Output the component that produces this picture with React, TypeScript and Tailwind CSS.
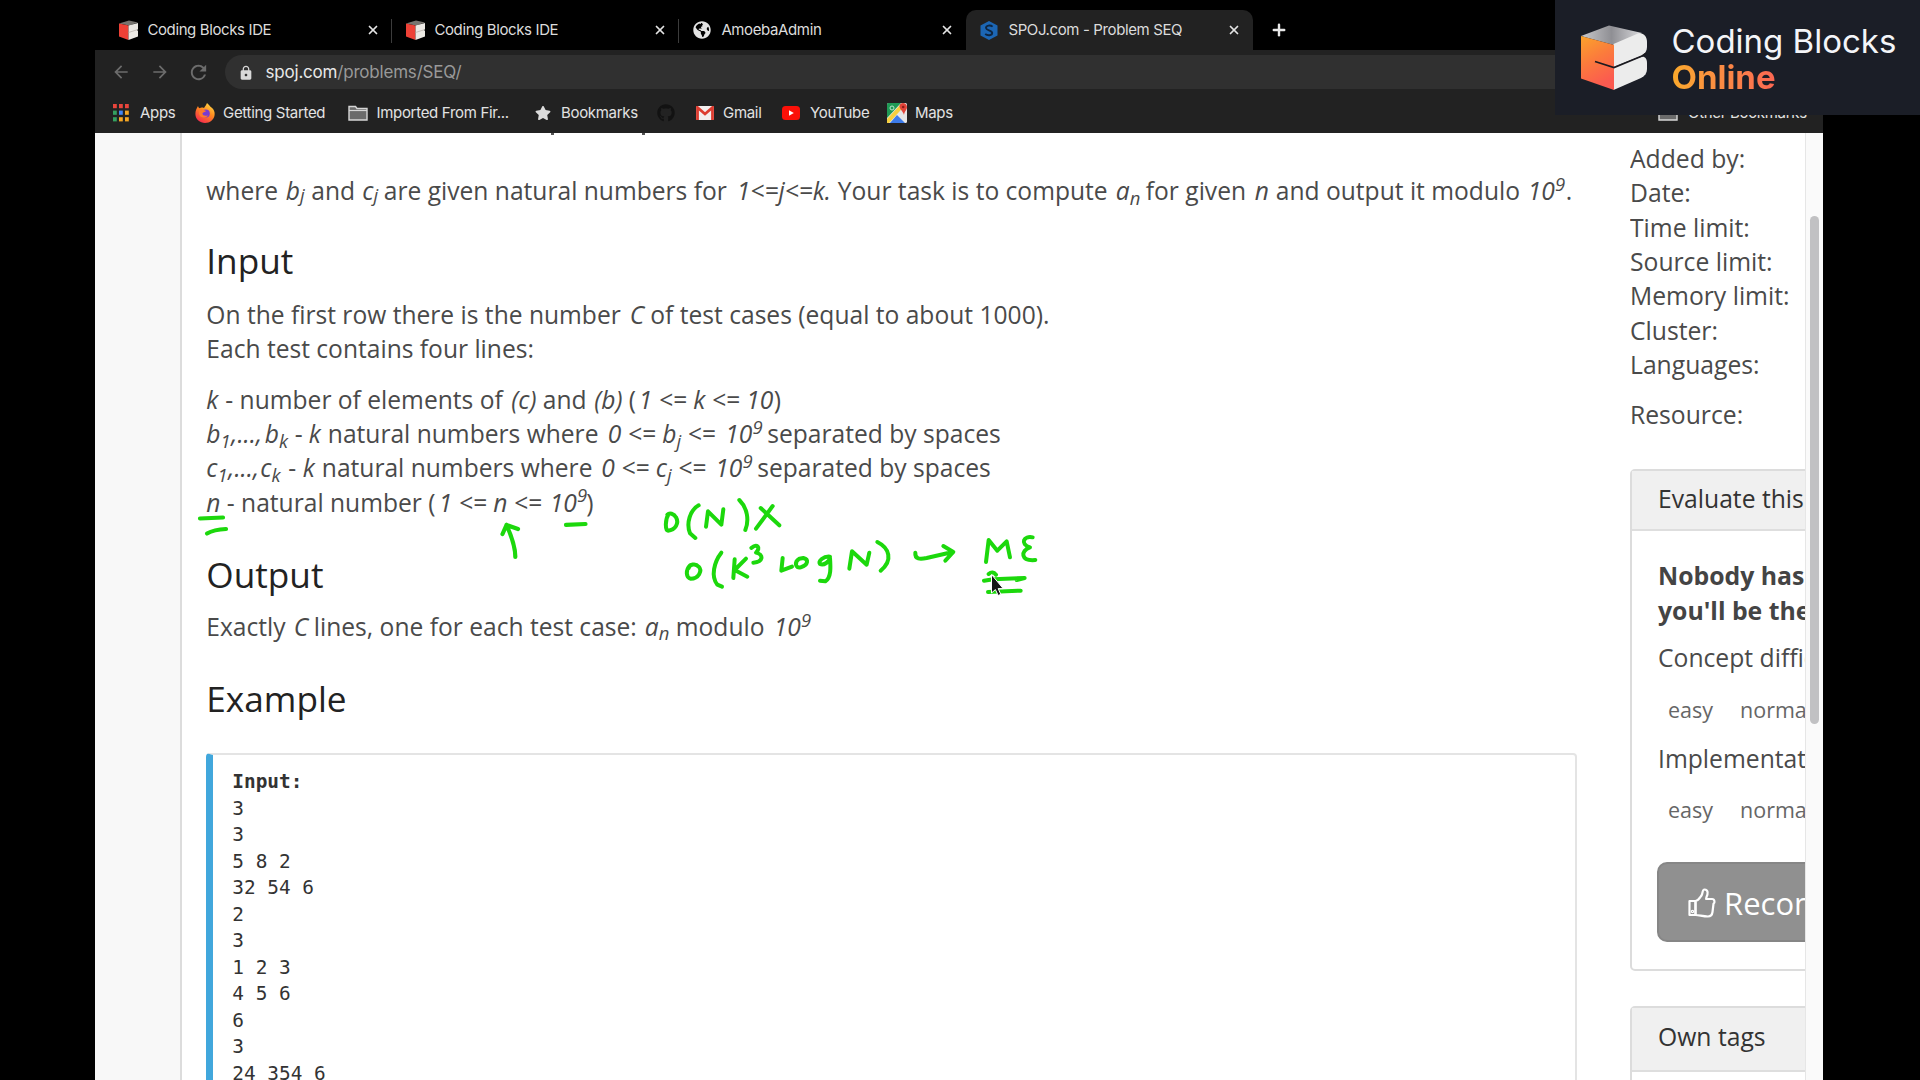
import React, { ReactNode } from "react";
import { MdArrowBack, MdArrowForward, MdRefresh, MdLock } from "react-icons/md";
import { FaGithub, FaGlobeAmericas, FaStar } from "react-icons/fa";
import { X, Plus } from "lucide-react";

const LEFT = 205.5;

/* ---------- icons ---------- */

function BlockIcon() {
  return (
    <svg viewBox="0 0 20 20" className="size-5">
      <path d="M0 3.5 10 0.5 19 2.5 10 5.5Z" fill="#77746f" />
      <path d="M0 3.5 9.5 5.5V20L0 16.5Z" fill="#ee4136" />
      <path d="M9.5 5.5 19 3V9L18 10 19 11V16.5L9.5 20Z" fill="#ece9e4" />
      <path d="M9.5 12.5 19 9.5" fill="none" stroke="#b5aca6" strokeWidth=".7" />
    </svg>
  );
}

function SpojIcon() {
  return (
    <svg viewBox="0 0 18 19" className="h-[19px] w-[18px]">
      <path d="M9 0 17.5 4.5V14.5L9 19 .5 14.5V4.5Z" fill="#1c66b4" />
      <path d="M12.6 5.6C10.5 3.8 5.8 4.2 6 7c.2 2.6 6.2 2 6.2 5 0 2.7-4.8 2.8-7 1" fill="none" stroke="#0e2540" strokeWidth="1.9" />
    </svg>
  );
}

function AppsIcon() {
  const colors = ["#e8453c", "#e8453c", "#e8453c", "#34a060", "#4285f4", "#f5a623", "#34a060", "#f5a623", "#f5a623"];
  const cells = colors.map((c, i) => (
    <rect key={i} x={(i % 3) * 6} y={Math.floor(i / 3) * 6.6} width="3.8" height="4.2" fill={c} />
  ));
  return <svg viewBox="0 0 16 18" className="h-[18px] w-4">{cells}</svg>;
}

function FirefoxIcon() {
  return (
    <svg viewBox="0 0 20 20" className="size-5">
      <defs>
        <linearGradient id="ff" x1=".85" y1="0" x2=".25" y2="1">
          <stop offset="0" stopColor="#ffe14a" />
          <stop offset=".45" stopColor="#ff8a1f" />
          <stop offset="1" stopColor="#f5264f" />
        </linearGradient>
      </defs>
      <path d="M12 0c2 1.5 2.5 3 4.5 4.5C19 6.5 20 9 19.6 12 19 16.5 15 20 10 20S.4 16.5.4 11c0-3 1-5.500 2.6-8 .3 1.2.8 1.8 1.5 2.2C6 4.300 7.5 4.5 9 5c1.2-1.5 2-3 3-5Z" fill="url(#ff)" />
      <circle cx="10.8" cy="10.5" r="4" fill="#7a3bd0" />
      <path d="M4 7c3-1.5 5 .2 7 1-1 1.5-3.5 1-3.5 2.6 0 2 3 3 5.500 1.6-1.5 3.5-8 3-9-1.2Z" fill="#ff7a2a" />
    </svg>
  );
}

function FolderIcon() {
  return (
    <svg viewBox="0 0 20 16" className="h-4 w-5">
      <path d="M1 15V1.5h6.5l1.5 2h10V15Z" fill="#6b6b6b" stroke="#d6d6d6" strokeWidth="1.4" />
      <path d="M1 5.5h18" stroke="#d6d6d6" strokeWidth="1.2" />
    </svg>
  );
}

function GmailIcon() {
  return (
    <svg viewBox="0 0 18 14" className="h-[14px] w-[18px]">
      <rect width="18" height="14" rx="1.5" fill="#f3eeee" />
      <path d="M1.5 14V1.5L9 8l7.5-6.5V14" fill="none" stroke="#dd3c30" strokeWidth="2.8" />
    </svg>
  );
}

function YouTubeIcon() {
  return (
    <svg viewBox="0 0 18 14" className="h-[14px] w-[18px]">
      <rect width="18" height="14" rx="3.5" fill="#fb1008" />
      <path d="M7 4.2v5.6L11.8 7Z" fill="#fff" />
    </svg>
  );
}

function MapsIcon() {
  return (
    <svg viewBox="0 0 20 20" className="size-5">
      <rect width="20" height="20" rx="1.5" fill="#e6e6e6" />
      <path d="M0 1.5Q0 0 1.5 0H14L0 15Z" fill="#1f9a55" />
      <path d="M0 20v-4L14 1l2.5 3L2 20Z" fill="#f6cf3e" />
      <path d="M3 20 10 12l8 8Z" fill="#3c7bea" />
      <path d="M12.5 3c0-4 7.5-4 7.5 1 0 3-2.5 4-3 8-1-4-4.5-5.500-4.5-9Z" fill="#e2453a" />
      <circle cx="16.2" cy="4" r="1.3" fill="#8c1d18" />
      <circle cx="5" cy="5" r="2" fill="none" stroke="#bfe6cf" strokeWidth="1" />
    </svg>
  );
}

function ThumbIcon() {
  return (
    <svg viewBox="0 0 28 30" className="h-[30px] w-7" fill="none" stroke="#fff" strokeWidth="2.2" strokeLinejoin="round" strokeLinecap="round">
      <path d="M7.5 13H1.5V27H7.5Z" />
      <path d="M7.5 13c3-.5 4.5-3.5 6-5.500C15 5.500 14 1.5 16.5 1.5c4 0 3.5 4.5 2 7.5-.3 1-.5 1.5-.3 2H24c3 0 3 4 1.5 4.8L24.5 24c-.4 3-1.5 4.5-4.5 4.5-5 0-9-1.5-12.5-1.5Z" />
      <circle cx="4.5" cy="23.5" r=".6" />
    </svg>
  );
}

function CubeLogo() {
  return (
    <svg viewBox="0 0 67 66" className="h-[66px] w-[67px]">
      <defs>
        <linearGradient id="cubeFront" x1="0" y1="0" x2=".35" y2="1">
          <stop offset="0" stopColor="#fba32b" />
          <stop offset=".5" stopColor="#fb7b3c" />
          <stop offset="1" stopColor="#fb5a50" />
        </linearGradient>
        <linearGradient id="cubeTop" x1="0" y1="0" x2="1" y2="0">
          <stop offset="0" stopColor="#c9c9cc" />
          <stop offset=".5" stopColor="#8f8f94" />
          <stop offset="1" stopColor="#dadadd" />
        </linearGradient>
      </defs>
      <path d="M1 11 29 .5 62 8 34 20Z" fill="url(#cubeTop)" />
      <path d="M33.5 19 58 8.5C63 7 67 11 67 17V22C67 26 65 29 61 31L33.5 42Z" fill="#ececec" />
      <path d="M33.5 42 61 32C65 31 67 34 67 38V44C67 48 65 51 61 53L33.5 65Z" fill="#ececec" />
      <path d="M1 11 34 20V65L1 53.5Z" fill="url(#cubeFront)" />
      <path d="M15 36.5 34 42.5 62 31 66.5 28" fill="none" stroke="#1b1a20" strokeWidth="1.7" />
    </svg>
  );
}

/* ---------- browser chrome ---------- */

function Tab({ icon, title, active, divider }: { icon: ReactNode; title: string; active?: boolean; divider?: boolean }) {
  return (
    <div className={"relative flex h-10 w-[287px] items-center pl-[14px] pr-3 " + (active ? "rounded-t-[10px] bg-[#222222]" : "")}>
      <span className="flex w-[28.4px] shrink-0">{icon}</span>
      <span className="flex-1 whitespace-nowrap text-[15px] tracking-[-0.38px] text-[#dcdcdc]">{title}</span>
      <X className="size-[14px]" strokeWidth={3} color="#e4e4e4" />
      {divider && <span className="absolute right-0 top-[9px] h-6 w-px bg-[#3c3c3c]" />}
    </div>
  );
}

function Bookmark({ icon, label, className }: { icon: ReactNode; label?: string; className: string }) {
  return (
    <div className={"flex shrink-0 items-center " + className}>
      {icon}
      {label && <span className="whitespace-nowrap text-[15px] tracking-[-0.31px] text-[#e2e2e2]">{label}</span>}
    </div>
  );
}

/* ---------- problem text ---------- */

type Seg = [number, ReactNode];

/* Each segment starts at its own x; its width runs to the start of the next one. */
function Line({ segs }: { segs: Seg[] }) {
  return (
    <div className="flex h-[34.3px] whitespace-pre leading-[34.3px]">
      {segs.map(([x, node], i) => {
        const next = segs[i + 1];
        return (
          <span key={i} className="shrink-0" style={next ? { width: next[0] - x } : undefined}>
            {node}
          </span>
        );
      })}
    </div>
  );
}

const Heading = ({ children, className }: { children: ReactNode; className: string }) => (
  <h3 className={"h-10 text-[35.2px] leading-10 text-[#222] " + className}>{children}</h3>
);

const ten9 = <i>10<sup>9</sup></i>;

const sample = ["3", "3", "5 8 2", "32 54 6", "2", "3", "1 2 3", "4 5 6", "6", "3", "24 354 6"];

function Problem() {
  return (
    <main className="w-[1450px] shrink-0 overflow-hidden border-l-2 border-[#dcdcdc] bg-white pl-[24.3px] text-[24.6px] text-[#4a4a4a]">
      <div className="flex h-[2px] pl-[345px]">
        <span className="mr-[88px] h-[2px] w-[3px] bg-[#555]" />
        <span className="h-[2px] w-[3px] bg-[#555]" />
      </div>
      <div className="mt-[39px]">
        <Line
          segs={[
            [LEFT, "where"],
            [285, <i>b<sub className="bottom-[-0.13em]">j</sub></i>],
            [310.5, "and"],
            [361.5, <i>c<sub className="bottom-[-0.13em]">j</sub></i>],
            [383, "are given natural numbers for"],
            [736, <i>1&lt;=j&lt;=k.</i>],
            [837, "Your task is to compute"],
            [1115, <i>a<sub>n</sub></i>],
            [1145, "for given"],
            [1254, <i>n</i>],
            [1275, "and output it modulo"],
            [1527, ten9],
            [1565, "."],
          ]}
        />
      </div>
      <Heading className="mt-[31.5px]">Input</Heading>
      <div className="mt-[18.3px]">
        <Line segs={[[LEFT, "On the first row there is the number"], [629, <i>C</i>], [649.5, "of test cases (equal to about 1000)."]]} />
        <Line segs={[[LEFT, "Each test contains four lines:"]]} />
      </div>
      <div className="mt-4">
        <Line
          segs={[
            [LEFT, <i>k</i>],
            [224.5, "- number of elements of"],
            [510.5, <i>(c)</i>],
            [542, "and"],
            [593.5, <i>(b)</i>],
            [628, "("],
            [638, <i>1 &lt;= k &lt;= 10</i>],
            [773, ")"],
          ]}
        />
        <Line
          segs={[
            [LEFT + 0.5, <i>b<sub>1</sub></i>],
            [231, <i>,...,</i>],
            [264.5, <i>b<sub>k</sub></i>],
            [294.5, "-"],
            [308.5, <i>k</i>],
            [327.5, "natural numbers where"],
            [607.5, <i>0 &lt;= b<sub>j</sub> &lt;= </i>],
            [725, ten9],
            [767, "separated by spaces"],
          ]}
        />
        <Line
          segs={[
            [LEFT + 0.5, <i>c<sub>1</sub></i>],
            [228, <i>,...,</i>],
            [260, <i>c<sub>k</sub></i>],
            [288, "-"],
            [302.5, <i>k</i>],
            [321.5, "natural numbers where"],
            [601, <i>0 &lt;= c<sub>j</sub> &lt;= </i>],
            [715, ten9],
            [757, "separated by spaces"],
          ]}
        />
        <Line segs={[[LEFT + 1, <i>n</i>], [227, "- natural number ("], [439, <i>1 &lt;= n &lt;= </i>], [550, ten9], [586.5, ")"]]} />
      </div>
      <Heading className="mt-[34px]">Output</Heading>
      <div className="mt-[16px]">
        <Line
          segs={[
            [LEFT, "Exactly"],
            [293, <i>C</i>],
            [313, "lines, one for each test case:"],
            [644, <i>a<sub>n</sub></i>],
            [675, "modulo"],
            [773, ten9],
          ]}
        />
      </div>
      <Heading className="mt-[34px]">Example</Heading>
      <pre className="mt-[35px] h-[400px] w-[1371px] rounded-[4px] border-2 border-l-[7px] border-[#e4e4e4] border-l-[#41a7dc] pl-[19px] pt-[14px] font-['DejaVu_Sans_Mono',monospace] text-[19.4px] leading-[26.5px] text-[#333]">
        <b>Input:</b>
        {"\n" + sample.join("\n")}
      </pre>
    </main>
  );
}

function Rating() {
  return (
    <div className="flex gap-[27px] whitespace-nowrap pl-[10px] text-[21.5px] leading-[30px] text-[#666]">
      <span>easy</span>
      <span>normal</span>
    </div>
  );
}

function Sidebar() {
  const facts = ["Added by:", "Date:", "Time limit:", "Source limit:", "Memory limit:", "Cluster:", "Languages:"];
  return (
    <aside className="w-[175px] shrink-0 overflow-hidden whitespace-nowrap bg-white text-[24.7px] leading-[34.4px] text-[#4a4a4a]">
      <div className="pt-[8.8px]">
        {facts.map((f) => (
          <div key={f} className="h-[34.4px]">{f}</div>
        ))}
      </div>
      <div className="mt-[15.5px] h-[34.4px]">Resource:</div>
      <section className="mt-[37px] h-[502px] w-[400px] rounded-[5px] border-2 border-[#dcdcdc]">
        <h4 className="h-[60px] border-b-2 border-[#dedede] bg-[#f0f0f0] pl-[26px] pt-[11px] text-[#333]">Evaluate this problem</h4>
        <div className="pl-[26px]">
          <p className="pt-[27px] text-[24.8px] font-bold leading-[34.4px] text-[#444]">
            Nobody has
            <br />
            you'll be the
          </p>
          <p className="mt-[13.5px]">Concept difficulty</p>
          <div className="mt-[19.5px]">
            <Rating />
          </div>
          <p className="mt-[17px]">Implementation</p>
          <div className="mt-[19px]">
            <Rating />
          </div>
          <button className="-ml-[1px] mt-[37px] flex h-20 w-[340px] items-center rounded-[10px] border-2 border-[#868686] bg-[#909090] pl-[29px] pt-[2px] text-[31px] text-white">
            <ThumbIcon />
            <span className="pl-[8px]">Recommend</span>
          </button>
        </div>
      </section>
      <section className="mt-[35px] h-[200px] w-[400px] rounded-[5px] border-2 border-[#dcdcdc]">
        <h4 className="h-[64px] border-b-2 border-[#dedede] bg-[#f0f0f0] pl-[26px] pt-[11.5px] text-[#333]">Own tags</h4>
      </section>
    </aside>
  );
}

/* ---------- overlays ---------- */

function Ink() {
  return (
    <svg viewBox="0 0 1920 1080" className="pointer-events-none absolute left-0 top-0 h-[1080px] w-[1920px]">
      <g fill="none" stroke="#1cd80c" strokeWidth="4.2" strokeLinecap="round" strokeLinejoin="round">
        <path d="M200 518.5 223 517.5" />
        <path d="M207 533.5Q214 529.5 226 529" />
        <path d="M566 524.8 585.5 524" />
        <path d="M515.3 557Q515.5 545 506.5 525M502.5 534 506.5 525 518 529" />
      </g>
      <g transform="translate(640 480) scale(.33333)" fill="none" stroke="#1cd80c" strokeWidth="12" strokeLinecap="round" strokeLinejoin="round">
        <path d="M86 102C74 120 76 152 84 152 106 150 118 130 108 112 102 100 88 98 82 104" />
        <path d="M176 76C150 90 138 130 150 160L166 174" />
        <path d="M198 140 204 94 244 134 250 88" />
        <path d="M298 60C322 84 328 120 316 150" />
        <path d="M362 84 418 136M398 78 348 146" />
        <path d="M150 256C136 270 138 294 152 296 176 296 188 272 176 260 166 248 148 254 146 264" />
        <path d="M244 218C222 246 212 290 232 314L246 320" />
        <path d="M284 238 280 294M318 236 284 270 322 290" />
        <path d="M334 204C350 190 364 202 348 218 372 224 370 246 340 248" />
        <path d="M428 234 424 272 456 260" />
        <path d="M478 236C462 246 466 266 482 262 506 254 506 238 490 234Z" />
        <path d="M570 230C550 228 534 244 540 252 552 258 568 244 570 234 572 262 574 292 556 304L540 302" />
        <path d="M628 266 636 214 680 254 688 218" />
        <path d="M712 186C748 204 760 240 722 272" />
        <path d="M826 218C824 238 840 238 860 234L938 216M910 198 940 216 916 242" />
        <path d="M1038 246 1046 180 1072 212 1100 184 1110 232" />
        <path d="M1178 172C1152 166 1138 192 1170 202 1140 212 1142 244 1186 240" />
        <path d="M1032 302 1060 298 1154 294 1130 300M1046 282Q1058 272 1068 284M1044 336 1142 332" />
      </g>
      <path d="M991.5 574.5V593L995.4 589.6 998.2 595.5 1000.8 594.3 998.2 588.6H1003.2Z" fill="#151515" stroke="#fff" strokeWidth="1" />
    </svg>
  );
}

function Brand() {
  return (
    <div className="absolute right-0 top-0 flex h-[115px] w-[365px] bg-[#1b1e27] pl-[25px] pt-[25px]">
      <CubeLogo />
      <div className="-mt-[2px] pl-[24.5px] text-[33px] leading-9">
        <div className="whitespace-nowrap text-[#f4f5f8]">Coding Blocks</div>
        <span className="block w-fit bg-gradient-to-r from-[#faa92b] to-[#fb6652] bg-clip-text font-bold text-transparent">Online</span>
      </div>
    </div>
  );
}

export default function App() {
  return (
    <div className="relative h-[1080px] w-[1920px] overflow-hidden bg-black font-[Inter,sans-serif]">
      <div className="ml-[95px] flex h-full w-[1728px] flex-col">
        <div className="flex h-[50px] shrink-0 items-end pl-[10px]">
          <Tab icon={<BlockIcon />} title="Coding Blocks IDE" divider />
          <Tab icon={<BlockIcon />} title="Coding Blocks IDE" divider />
          <Tab icon={<FaGlobeAmericas className="size-[18px]" color="#e3e3e3" />} title="AmoebaAdmin" />
          <Tab icon={<SpojIcon />} title="SPOJ.com - Problem SEQ" active />
          <Plus className="mb-[11px] ml-[17px] size-[18px]" strokeWidth={3.2} color="#e8e8e8" />
        </div>
        <div className="flex h-[83px] shrink-0 flex-col bg-[#222222]">
          <div className="mt-[5px] flex h-[34px] items-center pl-[16px] text-[#6c6c6c]">
            <MdArrowBack className="size-[20px]" />
            <MdArrowForward className="ml-[19px] size-[20px]" />
            <MdRefresh className="ml-[17px] size-[23px]" />
            <div className="ml-[15px] flex h-[34px] flex-1 items-center rounded-l-full bg-[#303030] pl-[13px] pt-[2px]">
              <MdLock className="mb-px size-[16px]" color="#d8d8d8" />
              <span className="whitespace-nowrap pl-[11.5px] text-[17px] tracking-[-0.2px] text-[#999]">
                <span className="text-[#e8e8e8]">spoj.com</span>/problems/SEQ/
              </span>
            </div>
          </div>
          <div className="flex h-[44px] items-center pl-[18px] pt-[4px]">
            <Bookmark icon={<AppsIcon />} label="Apps" className="w-[82px] gap-[11px]" />
            <Bookmark icon={<FirefoxIcon />} label="Getting Started" className="w-[153px] gap-[8px]" />
            <Bookmark icon={<FolderIcon />} label="Imported From Fir..." className="w-[187px] gap-[8.5px]" />
            <Bookmark icon={<FaStar className="size-[16px]" color="#dcdcdc" />} label="Bookmarks" className="w-[122px] gap-[10px]" />
            <Bookmark icon={<FaGithub className="size-[18px]" color="#121212" />} className="w-[39px]" />
            <Bookmark icon={<GmailIcon />} label="Gmail" className="w-[86px] gap-[9px]" />
            <Bookmark icon={<YouTubeIcon />} label="YouTube" className="w-[105px] gap-[10px]" />
            <Bookmark icon={<MapsIcon />} label="Maps" className="w-[771px] gap-[8px]" />
            <Bookmark icon={<FolderIcon />} label="Other Bookmarks" className="gap-[10px]" />
          </div>
        </div>
        <div className="flex min-h-0 flex-1 overflow-hidden bg-white font-['Open_Sans',sans-serif]">
          <div className="w-[85px] shrink-0 bg-[#f8f8f8]" />
          <Problem />
          <Sidebar />
          <div className="flex w-[18px] shrink-0 justify-center border-l border-[#e6e6e6] bg-[#fafafa] pt-[83px]">
            <div className="h-[508px] w-[9px] rounded-full bg-[#c1c1c3]" />
          </div>
        </div>
      </div>
      <Ink />
      <Brand />
    </div>
  );
}
